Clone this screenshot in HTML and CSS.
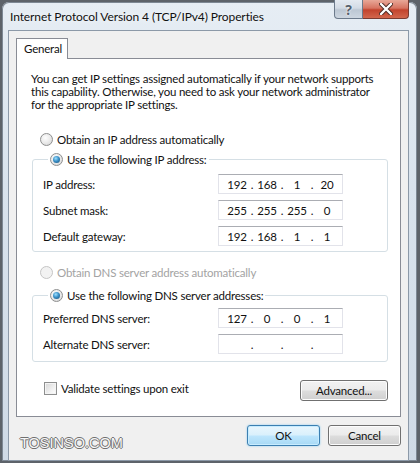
FILE: index.html
```html
<!DOCTYPE html>
<html>
<head>
  <title>Internet Protocol Version 4 (TCP/IPv4) Properties</title>
  <link rel="stylesheet" href="styles.css">
</head>
<body>
  <div class="window">
    <div class="titlebar">
      <span class="title">Internet Protocol Version 4 (TCP/IPv4) Properties</span>
      <div class="caption">
        <span class="cap help">?</span>
        <span class="cap close">
          <svg width="14" height="12" viewBox="0 0 14 12">
            <path d="M2 1 L12 11 M12 1 L2 11" stroke="#4a2a24" stroke-width="4.2" stroke-linecap="round"/>
            <path d="M2 1 L12 11 M12 1 L2 11" stroke="#fff" stroke-width="2.4" stroke-linecap="round"/>
          </svg>
        </span>
      </div>
    </div>

    <div class="client">
      <div class="tabs">
        <span class="tab">General</span>
      </div>

      <div class="panel">
        <p class="intro">You can get IP settings assigned automatically if your network supports
          this capability. Otherwise, you need to ask your network administrator
          for the appropriate IP settings.</p>

        <label class="option"><span class="radio"></span>Obtain an IP address automatically</label>

        <fieldset class="group">
          <legend><label class="option"><span class="radio on"></span>Use the following IP address:</label></legend>
          <div class="fields">
            <span class="label">IP address:</span>
            <div class="ip"><span>192</span><i>.</i><span>168</span><i>.</i><span>1</span><i>.</i><span>20</span></div>
            <span class="label">Subnet mask:</span>
            <div class="ip"><span>255</span><i>.</i><span>255</span><i>.</i><span>255</span><i>.</i><span>0</span></div>
            <span class="label">Default gateway:</span>
            <div class="ip"><span>192</span><i>.</i><span>168</span><i>.</i><span>1</span><i>.</i><span>1</span></div>
          </div>
        </fieldset>

        <label class="option disabled"><span class="radio"></span>Obtain DNS server address automatically</label>

        <fieldset class="group dns">
          <legend><label class="option"><span class="radio on"></span>Use the following DNS server addresses:</label></legend>
          <div class="fields">
            <span class="label">Preferred DNS server:</span>
            <div class="ip"><span>127</span><i>.</i><span>0</span><i>.</i><span>0</span><i>.</i><span>1</span></div>
            <span class="label">Alternate DNS server:</span>
            <div class="ip"><span></span><i>.</i><span></span><i>.</i><span></span><i>.</i><span></span></div>
          </div>
        </fieldset>

        <div class="panel-foot">
          <label class="option check-row"><span class="checkbox"></span>Validate settings upon exit</label>
          <button class="btn advanced">Advanced...</button>
        </div>
      </div>

      <div class="footer">
        <span class="watermark">TOSINSO.COM</span>
        <button class="btn default">OK</button>
        <button class="btn">Cancel</button>
      </div>
    </div>
  </div>
</body>
</html>
```

FILE: styles.css
```css
body {
  margin: 0;
  background: #5d636a;
  font-family: Lato, "Noto Sans", sans-serif;
  font-size: 11.5px;
  letter-spacing: -0.2px;
  color: #111;
}

.window {
  width: 415px;
  height: 459px;
  margin: 2px 0 0 2px;
  padding: 0 8px 0 6px;
  box-sizing: border-box;
  border-radius: 7px 7px 0 0;
  background: linear-gradient(180deg, #e6edf4 0%, #d9e3ed 40%, #cfdae6 100%);
  box-shadow: inset 0 0 0 1px #7d8894;
  display: flex;
  flex-direction: column;
}

/* title bar */

.titlebar {
  height: 28px;
  display: flex;
  align-items: flex-start;
}

.title {
  margin: 7px 0 0 2px;
  font-size: 12px;
  letter-spacing: -0.1px;
  color: #111;
  text-shadow: 0 0 6px #fff;
}

.caption {
  margin-left: auto;
  margin-top: -2px;
  display: flex;
}

.cap {
  height: 19px;
  display: flex;
  align-items: center;
  justify-content: center;
  box-sizing: border-box;
  border: 1px solid #6c7a8b;
  border-top: none;
}

.help {
  width: 29px;
  border-radius: 0 0 0 4px;
  background: linear-gradient(180deg, #e4eaf1 0%, #d3dbe5 45%, #bcc7d3 55%, #cdd6e0 100%);
  font-family: "Noto Sans", sans-serif;
  font-weight: bold;
  font-size: 14px;
  letter-spacing: 0;
  color: #56616e;
  text-shadow: 0 0 2px #fff, 0 0 1px #fff;
}

.close {
  width: 46px;
  border-left: none;
  border-color: #7a3a30;
  border-radius: 0 0 4px 0;
  background: linear-gradient(180deg, #e8a898 0%, #d77462 45%, #c2432d 55%, #d2664c 100%);
}

/* client area */

.client {
  flex: 1;
  background: #f0f0f0;
  border: 1px solid #8c99a8;
  padding: 7px 7px 0 7px;
}

.tabs {
  display: flex;
  height: 20px;
}

.tab {
  width: 52px;
  height: 21px;
  box-sizing: border-box;
  border: 1px solid #898c95;
  border-bottom: none;
  background: #fff;
  padding: 3px 0 0 7px;
  position: relative;
  z-index: 1;
}

.panel {
  height: 359px;
  box-sizing: border-box;
  border: 1px solid #898c95;
  background: #fff;
  padding: 13px 12px 0 14px;
}

.intro {
  width: 346px;
  margin: 0 0 20px 0;
  line-height: 13px;
}

.option {
  display: flex;
  align-items: center;
  height: 16px;
  white-space: nowrap;
}

.option.disabled {
  color: #a3a3a3;
}

.panel > .option {
  margin-left: 9px;
}

.radio {
  width: 13px;
  height: 13px;
  box-sizing: border-box;
  border-radius: 50%;
  border: 1px solid #8e8f8f;
  background: radial-gradient(circle at 40% 35%, #fefefe 0%, #e8e8e8 55%, #cfcfcf 100%);
  margin-right: 4px;
  display: flex;
  align-items: center;
  justify-content: center;
}

.radio.on::after {
  content: "";
  width: 7px;
  height: 7px;
  border-radius: 50%;
  background: radial-gradient(circle at 40% 35%, #9fe0ff 0%, #3b91c8 45%, #144a74 100%);
}

.disabled .radio {
  border-color: #c5c5c5;
  background: #f2f2f2;
}

.group {
  margin: 4px 0 0 1px;
  padding: 0 0 5px 10px;
  border: 1px solid #d5dfe5;
  border-radius: 3px;
}

.group legend {
  margin-left: 5px;
  padding: 0 2px;
}

.fields {
  display: grid;
  grid-template-columns: 175px 125px;
  row-gap: 6px;
  align-items: center;
  margin-top: 7px;
}

.dns .fields {
  margin-top: 5px;
}

.ip {
  height: 20px;
  box-sizing: border-box;
  border: 1px solid #e2e3ea;
  border-top-color: #abadb3;
  display: flex;
  align-items: center;
  padding-left: 7px;
}

.ip span {
  width: 22px;
  text-align: center;
}

.ip i {
  font-style: normal;
  width: 8px;
  text-align: center;
}

.group.dns {
  margin-top: 7px;
  padding-bottom: 7px;
}

.group + .option {
  margin-top: 12px;
}

.panel-foot {
  display: flex;
  align-items: flex-start;
  margin-top: 18px;
}

.check-row {
  margin: 0 0 0 13px;
  height: 12px;
  padding-top: 2px;
}

.checkbox {
  width: 13px;
  height: 13px;
  box-sizing: border-box;
  border: 1px solid #8e8f8f;
  background: linear-gradient(135deg, #d6d6d6 0%, #f4f4f4 70%, #fff 100%);
  box-shadow: inset 0 0 0 1px #f4f4f4;
  margin-right: 4px;
}

.btn {
  font: inherit;
  letter-spacing: inherit;
  color: #111;
  height: 21px;
  width: 73px;
  padding: 0;
  border: 1px solid #707070;
  border-radius: 3px;
  background: linear-gradient(180deg, #f2f2f2 0%, #ebebeb 49%, #dddddd 51%, #cfcfcf 100%);
  box-shadow: inset 0 0 0 1px #fcfcfc;
}

.advanced {
  width: 88px;
  margin-left: auto;
}

/* dialog buttons */

.footer {
  display: flex;
  align-items: center;
  gap: 8px;
  height: 37px;
}

.watermark {
  margin: 14px auto 0 4px;
  font-family: "Liberation Sans", Arial, sans-serif;
  font-size: 14.5px;
  letter-spacing: 0;
  color: #f6f6f6;
  text-shadow: -1px 0 #707070, 1px 0 #707070, 0 -1px #707070, 0 1px #707070;
}

.btn.default {
  border-color: #3c7fb1;
  background: linear-gradient(180deg, #eaf6fd 0%, #d9f0fc 49%, #bee6fd 51%, #a7d9f5 100%);
  box-shadow: inset 0 0 0 1px #c7ecff, 0 0 2px #7fc7ee;
}
```
